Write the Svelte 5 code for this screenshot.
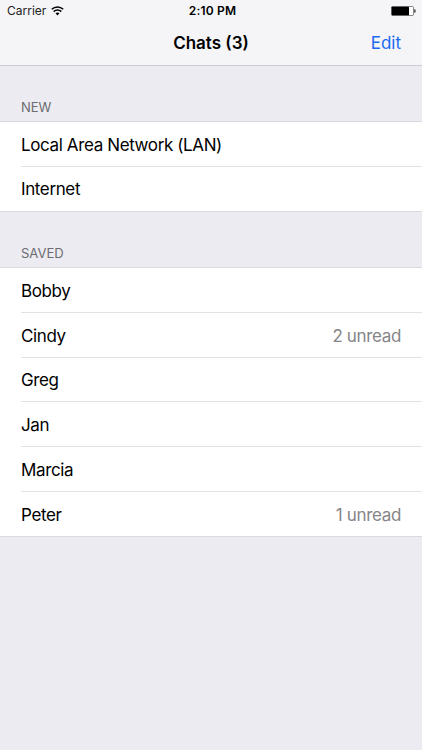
<script>
    let savedChats = [
        {"name" : "Bobby" , "unread" : 0},
        {"name" : "Cindy" , "unread" : 2},
        {"name" : "Greg" , "unread" : 0},
        {"name" : "Jan" , "unread" : 0},
        {"name" : "Marcia" , "unread" : 0},
        {"name" : "Peter" , "unread" : 1}
    ];

    let sections = [
        {"title" : "New" , "rows" : [{"name" : "Local Area Network (LAN)" , "unread" : 0} , {"name" : "Internet" , "unread" : 0}]},
        {"title" : "Saved" , "rows" : savedChats}
    ];

    let totalUnread = savedChats.reduce((sum, chat) => sum + chat.unread, 0);
</script>


<main>
    <header>
        <div class="status">
            <div class="carrier">
                <span>Carrier</span>
                <svg class="wifi" width="13" height="10" viewBox="0 0 13 10">
                    <path d="M0.8 3.3 A8.1 8.1 0 0 1 12.2 3.3" />
                    <path d="M2.7 5.6 A5.4 5.4 0 0 1 10.3 5.6" />
                    <path class="dot" d="M4.5 7.3 A3 3 0 0 1 8.5 7.3 L6.5 9.4 Z" />
                </svg>
            </div>
            <div class="time">2:10 PM</div>
            <div class="power">
                <svg width="25" height="10" viewBox="0 0 25 10">
                    <rect x="0.5" y="0.5" width="22" height="9" rx="1" fill="#fff" stroke="#555" stroke-width="0.7" />
                    <rect x="0.7" y="0.7" width="17.3" height="8.6" rx="0.5" fill="#000" />
                    <path d="M23.3 3.3 h0.4 a0.8 0.8 0 0 1 0.8 0.8 v1.8 a0.8 0.8 0 0 1 -0.8 0.8 h-0.4 z" fill="#222" />
                </svg>
            </div>
        </div>

        <nav>
            <h1>Chats ({totalUnread})</h1>
            <button>Edit</button>
        </nav>
    </header>

    {#each sections as section}
        <section>
            <h2>{section.title}</h2>
            <ul>
                {#each section.rows as row}
                    <li>
                        <div class="row">
                            <span class="name">{row.name}</span>
                            {#if row.unread > 0}
                                <span class="unread">{row.unread} unread</span>
                            {/if}
                        </div>
                    </li>
                {/each}
            </ul>
        </section>
    {/each}
</main>


<style>
    :global(body) {
        background: #ebebf1;
    }

    main {
        box-sizing: border-box;
        min-height: 750px;
        background: #ebebf1;
        font-family: Inter, "Liberation Sans", sans-serif;
        font-size: 17px;
        color: #000;
    }

    header {
        box-sizing: border-box;
        height: 66px;
        background: #f5f5f7;
        border-bottom: 1px solid #cbcbd0;
    }

    .status {
        display: grid;
        grid-template-columns: 1fr auto 1fr;
        align-items: center;
        height: 21px;
        padding: 0 6px 0 7px;
        font-size: 12px;
    }

    .carrier {
        display: flex;
        align-items: center;
        gap: 5px;
        color: #222;
    }

    .wifi {
        fill: none;
        stroke: #000;
        stroke-width: 1.6;
    }

    .wifi .dot {
        fill: #000;
        stroke: none;
    }

    .time {
        padding-left: 2px;
        font-weight: 600;
        letter-spacing: 0.2px;
    }

    .power {
        display: flex;
        justify-content: flex-end;
    }

    nav {
        display: grid;
        grid-template-columns: 1fr auto 1fr;
        align-items: center;
        height: 43px;
        padding: 0 21px;
    }

    h1 {
        grid-column: 2;
        margin: 0;
        font-size: 17px;
        font-weight: 600;
    }

    button {
        justify-self: end;
        padding: 0;
        border: none;
        background: none;
        font: inherit;
        color: #1a6bf0;
    }

    h2 {
        box-sizing: border-box;
        height: 55px;
        margin: 0;
        padding: 33px 21px 0;
        font-size: 13px;
        line-height: 16px;
        font-weight: 400;
        text-transform: uppercase;
        color: #6b6b70;
    }

    ul {
        margin: 0;
        padding: 0;
        list-style: none;
        background: #fff;
        border-top: 1px solid #d9d9de;
        border-bottom: 1px solid #d9d9de;
    }

    li {
        padding-left: 21px;
    }

    .row {
        box-sizing: border-box;
        display: flex;
        align-items: center;
        justify-content: space-between;
        height: 44.8px;
        padding: 2px 21px 0 0;
        border-bottom: 1px solid #e2e2e5;
    }

    li:last-child .row {
        height: 44.2px;
        padding-top: 1px;
        border-bottom: none;
    }

    .name {
        letter-spacing: -0.38px;
    }

    .unread {
        letter-spacing: -0.35px;
        color: #858589;
    }
</style>
